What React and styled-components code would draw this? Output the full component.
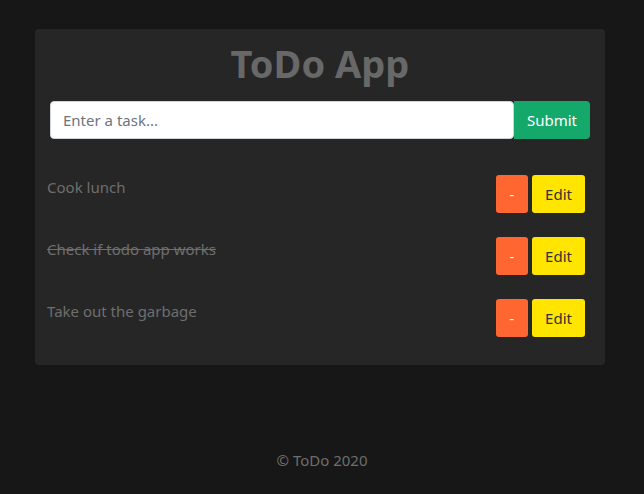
import React from 'react';
import styled, { createGlobalStyle } from 'styled-components';

const GlobalStyle = createGlobalStyle`
  html, body {
    margin: 0;
    padding: 0;
    background: #171717;
    font-family: "Noto Sans", "Open Sans", sans-serif;
  }
`;

const Page = styled.div`
  min-height: 494px;
  display: flex;
  flex-direction: column;
`;

const Card = styled.div`
  width: 570px;
  margin: 29px 0 0 35px;
  box-sizing: border-box;
  background: #262626;
  border-radius: 4px;
  padding: 6px 15px 28px 15px;
`;

const Title = styled.h1`
  margin: 0 0 10px;
  text-align: center;
  font-size: 38px;
  line-height: 56px;
  font-weight: 700;
  color: #686868;
`;

const Form = styled.form`
  display: flex;
  height: 38px;
  margin-bottom: 36px;
`;

const Input = styled.input`
  flex: 1;
  box-sizing: border-box;
  height: 38px;
  border: 1px solid #ced4da;
  border-radius: 4px;
  padding: 0 12px;
  font-family: inherit;
  font-size: 15px;
  color: #495057;
  outline: none;

  &::placeholder {
    color: #6c757d;
  }
`;

const SubmitButton = styled.button`
  width: 76px;
  height: 38px;
  border: none;
  border-radius: 0 4px 4px 0;
  background: #14a86b;
  color: #fff;
  font-family: inherit;
  font-size: 15px;
`;

const List = styled.ul`
  list-style: none;
  margin: 0 5px 0 -3px;
  padding: 0;
  display: flex;
  flex-direction: column;
  gap: 24px;
`;

const Row = styled.li`
  display: flex;
  justify-content: space-between;
  align-items: flex-start;
`;

const TaskText = styled.span`
  padding-top: 1px;
  font-size: 15px;
  line-height: 22px;
  color: #6e6e6e;
  text-decoration: ${p => (p.done ? 'line-through' : 'none')};
`;

const Actions = styled.div`
  display: flex;
  gap: 4px;
`;

const ActionButton = styled.button`
  height: 38px;
  min-width: ${p => p.width}px;
  border: none;
  border-radius: 3px;
  background: ${p => p.bg};
  color: ${p => p.fg};
  font-family: inherit;
  font-size: 15px;
  padding: 0 12px;
`;

const Footer = styled.footer`
  margin-top: 85px;
  text-align: center;
  font-size: 15px;
  color: #6e6e6e;
`;

const tasks = [
  { text: 'Cook lunch', done: false },
  { text: 'Check if todo app works', done: true },
  { text: 'Take out the garbage', done: false },
];

const App = () => (
  <Page>
    <GlobalStyle />
    <Card>
      <Title>ToDo App</Title>
      <Form onSubmit={e => e.preventDefault()}>
        <Input placeholder="Enter a task..." />
        <SubmitButton type="submit">Submit</SubmitButton>
      </Form>
      <List>
        {tasks.map(t => (
          <Row key={t.text}>
            <TaskText done={t.done}>{t.text}</TaskText>
            <Actions>
              <ActionButton width={32} bg="#ff6630" fg="#fff">-</ActionButton>
              <ActionButton width={53} bg="#ffe500" fg="#333">Edit</ActionButton>
            </Actions>
          </Row>
        ))}
      </List>
    </Card>
    <Footer>© ToDo 2020</Footer>
  </Page>
);

export default App;
